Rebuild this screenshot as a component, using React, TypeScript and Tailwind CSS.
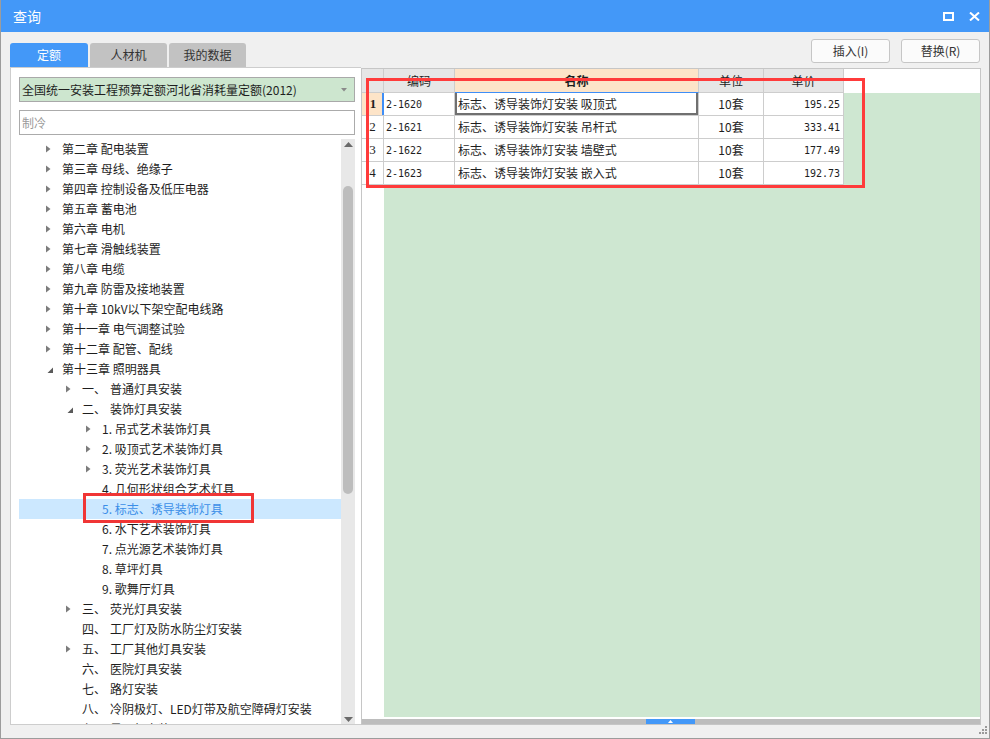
import React from 'react';

type Node = { level: 1 | 2 | 3; arrow?: 'r' | 'd'; num?: string; label: string; selected?: boolean };

const tree: Node[] = [
  { level: 1, arrow: 'r', label: '第二章 配电装置' },
  { level: 1, arrow: 'r', label: '第三章 母线、绝缘子' },
  { level: 1, arrow: 'r', label: '第四章 控制设备及低压电器' },
  { level: 1, arrow: 'r', label: '第五章 蓄电池' },
  { level: 1, arrow: 'r', label: '第六章 电机' },
  { level: 1, arrow: 'r', label: '第七章 滑触线装置' },
  { level: 1, arrow: 'r', label: '第八章 电缆' },
  { level: 1, arrow: 'r', label: '第九章 防雷及接地装置' },
  { level: 1, arrow: 'r', label: '第十章 10kV以下架空配电线路' },
  { level: 1, arrow: 'r', label: '第十一章 电气调整试验' },
  { level: 1, arrow: 'r', label: '第十二章 配管、配线' },
  { level: 1, arrow: 'd', label: '第十三章 照明器具' },
  { level: 2, arrow: 'r', num: '一、', label: '普通灯具安装' },
  { level: 2, arrow: 'd', num: '二、', label: '装饰灯具安装' },
  { level: 3, arrow: 'r', label: '1. 吊式艺术装饰灯具' },
  { level: 3, arrow: 'r', label: '2. 吸顶式艺术装饰灯具' },
  { level: 3, arrow: 'r', label: '3. 荧光艺术装饰灯具' },
  { level: 3, label: '4. 几何形状组合艺术灯具' },
  { level: 3, label: '5. 标志、诱导装饰灯具', selected: true },
  { level: 3, label: '6. 水下艺术装饰灯具' },
  { level: 3, label: '7. 点光源艺术装饰灯具' },
  { level: 3, label: '8. 草坪灯具' },
  { level: 3, label: '9. 歌舞厅灯具' },
  { level: 2, arrow: 'r', num: '三、', label: '荧光灯具安装' },
  { level: 2, num: '四、', label: '工厂灯及防水防尘灯安装' },
  { level: 2, arrow: 'r', num: '五、', label: '工厂其他灯具安装' },
  { level: 2, num: '六、', label: '医院灯具安装' },
  { level: 2, num: '七、', label: '路灯安装' },
  { level: 2, num: '八、', label: '冷阴极灯、LED灯带及航空障碍灯安装' },
  { level: 2, num: '九、', label: '景观灯安装' },
];

const indent: Record<number, string> = { 1: 'pl-[26px]', 2: 'pl-[46px]', 3: 'pl-[66px]' };

const rows = [
  { code: '2-1620', name: '标志、诱导装饰灯安装 吸顶式', unit: '10套', price: '195.25' },
  { code: '2-1621', name: '标志、诱导装饰灯安装 吊杆式', unit: '10套', price: '333.41' },
  { code: '2-1622', name: '标志、诱导装饰灯安装 墙壁式', unit: '10套', price: '177.49' },
  { code: '2-1623', name: '标志、诱导装饰灯安装 嵌入式', unit: '10套', price: '192.73' },
];

function Arrow({ kind }: { kind?: 'r' | 'd' }) {
  return (
    <div className="w-[17px] h-full shrink-0 flex items-center">
      {kind === 'r' && (
        <svg width="6" height="8" viewBox="0 0 6 8" className="ml-[1px]">
          <polygon points="0,0.5 4.5,4 0,7.5" fill="#7c7c7c" />
        </svg>
      )}
      {kind === 'd' && (
        <svg width="8" height="8" viewBox="0 0 8 8" className="ml-[1px] mt-[1px]">
          <polygon points="7,1.5 7,7 1.5,7" fill="#5a5a5a" />
        </svg>
      )}
    </div>
  );
}

export default function App() {
  return (
    <div className="relative w-[990px] h-[739px] flex flex-col bg-[#f0f0f0] border-x border-b border-[#9c9c9c] overflow-hidden font-['Noto_Sans_CJK_SC',sans-serif] text-[12px] text-[#1e1e1e]">
      {/* Title bar */}
      <div className="h-[32px] shrink-0 bg-[#4398f8] flex items-center justify-between pl-[12px] pr-[9px] text-white">
        <span className="text-[14px] leading-none">查询</span>
        <div className="flex items-center gap-[15px]">
          <svg width="11" height="9" viewBox="0 0 11 9">
            <rect x="1" y="1" width="9" height="7" fill="none" stroke="white" strokeWidth="2" />
          </svg>
          <svg width="11" height="9" viewBox="0 0 11 9">
            <path d="M1 0.5 L10 8.5 M10 0.5 L1 8.5" stroke="white" strokeWidth="2" />
          </svg>
        </div>
      </div>

      {/* Tabs + buttons */}
      <div className="h-[35px] shrink-0 flex justify-between pl-[9px] pr-[9px]">
        <div className="flex items-end gap-[2px]">
          <div className="w-[78px] h-[24px] rounded-t-[3px] bg-[#4398f8] text-white flex items-center justify-center">定额</div>
          <div className="w-[77px] h-[24px] rounded-t-[3px] bg-[#c2c2c2] text-[#333] flex items-center justify-center">人材机</div>
          <div className="w-[77px] h-[24px] rounded-t-[3px] bg-[#c2c2c2] text-[#333] flex items-center justify-center">我的数据</div>
        </div>
        <div className="flex gap-[11px] pt-[7px]">
          <div className="w-[79px] h-[24px] rounded-[3px] border border-[#c6c6c6] bg-[#fbfbfb] text-[#333] flex items-center justify-center">插入(I)</div>
          <div className="w-[79px] h-[24px] rounded-[3px] border border-[#c6c6c6] bg-[#fbfbfb] text-[#333] flex items-center justify-center">替换(R)</div>
        </div>
      </div>

      {/* Main */}
      <div className="h-[658px] shrink-0 flex pl-[9px]">
        {/* Left panel */}
        <div className="w-[351px] h-full shrink-0 bg-white border-l border-t border-b border-[#cdcdcd] flex flex-col pl-[8px] pr-[6px] pt-[9px]">
          <div className="h-[25px] shrink-0 bg-[#cde6cf] border border-[#a9a9a9] flex items-center justify-between pl-[2px] pr-[7px]">
            <span>全国统一安装工程预算定额河北省消耗量定额(2012)</span>
            <svg width="6" height="4" viewBox="0 0 6 4">
              <polygon points="0,0 6,0 3,3.5" fill="#8a8a8a" />
            </svg>
          </div>
          <div className="mt-[8px] h-[25px] shrink-0 border border-[#ababab] flex items-center pl-[2px] text-[#9a9a9a]">制冷</div>
          <div className="mt-[4px] flex-1 min-h-0 flex">
            <div className="w-[322px] overflow-hidden">
              {tree.map((n, i) => (
                <div
                  key={i}
                  className={`h-[20px] flex items-center whitespace-nowrap leading-[20px] ${indent[n.level]} ${n.selected ? 'bg-[#cce8ff] text-[#3a8ee8]' : ''}`}
                >
                  <Arrow kind={n.arrow} />
                  {n.num && <span className="w-[28px] shrink-0">{n.num}</span>}
                  <span>{n.label}</span>
                </div>
              ))}
            </div>
            <div className="w-[14px] shrink-0 bg-[#e8e8e8] flex flex-col items-center pt-[3px] pb-[2px]">
              <svg width="9" height="5" viewBox="0 0 9 5">
                <polygon points="4.5,0 9,5 0,5" fill="#6a6a6a" />
              </svg>
              <div className="mt-[39px] w-[10px] h-[308px] rounded-[5px] bg-[#bdbdbd]" />
              <div className="flex-1" />
              <svg width="9" height="5" viewBox="0 0 9 5">
                <polygon points="0,0 9,0 4.5,5" fill="#6a6a6a" />
              </svg>
            </div>
          </div>
        </div>

        {/* Right panel */}
        <div className="mt-[1px] w-[620px] h-[657px] shrink-0 border border-[#c6c6c6] bg-white flex flex-col">
          <div className="h-[24px] shrink-0 flex">
            <div className="w-[22px] bg-[#e6e6e6] border-r border-b border-[#cdcdcd]" />
            <div className="w-[71px] bg-[#e6e6e6] border-r border-b border-[#cdcdcd] flex items-center justify-center">编码</div>
            <div className="w-[244px] bg-[#fde4c8] border-r border-b border-r-[#cdcdcd] border-b-[#3e8ef7] flex items-center justify-center font-bold">名称</div>
            <div className="w-[65px] bg-[#e6e6e6] border-r border-b border-[#cdcdcd] flex items-center justify-center">单位</div>
            <div className="w-[80px] bg-[#e6e6e6] border-r border-b border-[#cdcdcd] flex items-center justify-center">单价</div>
            <div className="flex-1" />
          </div>
          <div className="flex-1 min-h-0 flex">
            <div className="w-[22px] shrink-0 bg-white">
              {rows.map((r, i) => (
                <div
                  key={i}
                  className={`h-[23px] border-b border-[#cdcdcd] flex items-center justify-center font-['Liberation_Serif',serif] text-[13px] ${i === 0 ? 'bg-[#fde4c8] font-bold shadow-[inset_-2px_0_0_#3e8ef7]' : 'border-r'}`}
                >
                  {i + 1}
                </div>
              ))}
            </div>
            <div className="flex-1 bg-[#cee7d1]">
              {rows.map((r, i) => (
                <div key={i} className="h-[23px] w-[460px] flex bg-white">
                  <div className="w-[71px] border-r border-b border-[#cdcdcd] flex items-center pl-[2px] font-['DejaVu_Sans_Mono',monospace] text-[10px]">{r.code}</div>
                  <div
                    className={`w-[244px] border-r border-b border-[#cdcdcd] flex items-center pl-[3px] whitespace-nowrap ${i === 0 ? 'shadow-[inset_2px_0_0_#707070,inset_-2px_0_0_#707070,inset_0_-2px_0_#707070]' : ''}`}
                  >
                    {r.name}
                  </div>
                  <div className="w-[65px] border-r border-b border-[#cdcdcd] flex items-center justify-center">{r.unit}</div>
                  <div className="w-[80px] border-r border-b border-[#cdcdcd] flex items-center justify-end pr-[3px] font-['DejaVu_Sans_Mono',monospace] text-[10px]">{r.price}</div>
                </div>
              ))}
            </div>
          </div>
          <div className="h-[7px] shrink-0 flex flex-col">
            <div className="h-[2px] bg-white" />
            <div className="h-[5px] bg-[#bdbdbd] flex">
              <div className="ml-[284px] w-[49px] h-full bg-[#4398f8] flex items-center justify-center">
                <svg width="5" height="3" viewBox="0 0 5 3">
                  <polygon points="2.5,0 5,3 0,3" fill="white" />
                </svg>
              </div>
            </div>
          </div>
        </div>
      </div>

      {/* Bottom strip */}
      <div className="flex-1 flex justify-end items-start pr-[2px] pt-[1px]">
        <svg width="8" height="8" viewBox="0 0 8 8">
          <rect x="6" y="0" width="2" height="2" fill="#9a9a9a" />
          <rect x="3" y="3" width="2" height="2" fill="#9a9a9a" />
          <rect x="6" y="3" width="2" height="2" fill="#9a9a9a" />
          <rect x="0" y="6" width="2" height="2" fill="#9a9a9a" />
          <rect x="3" y="6" width="2" height="2" fill="#9a9a9a" />
          <rect x="6" y="6" width="2" height="2" fill="#9a9a9a" />
        </svg>
      </div>

      {/* Red annotation boxes */}
      <div className="absolute left-[365px] top-[78px] w-[499px] h-[110px] border-[3px] border-[#ff3b3b] pointer-events-none" />
      <div className="absolute left-[82px] top-[493px] w-[171px] h-[30px] border-[3px] border-[#f03535] pointer-events-none" />
    </div>
  );
}
